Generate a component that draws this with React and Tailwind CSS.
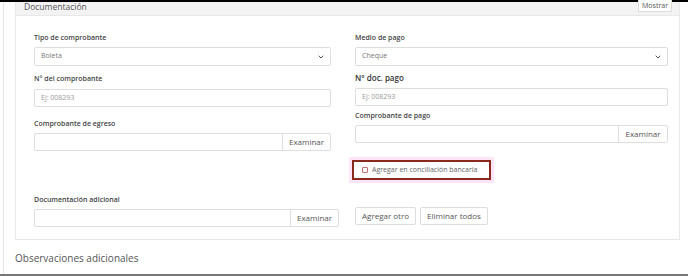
import React from 'react';

const font = "font-['Open_Sans',_'Noto_Sans',_sans-serif]";

function Label({ children, big }) {
  return (
    <div className={big ? "h-[10px] text-[8px] leading-[10px] font-semibold text-[#333]" : "h-[10px] text-[7px] leading-[10px] font-semibold text-[#444]"}>
      {children}
    </div>
  );
}

function Select({ value }) {
  return (
    <div className="h-[19px] border border-[#dedede] rounded-[2px] flex items-center justify-between pl-[6px] pr-[6px] text-[7px] text-[#777]">
      <span>{value}</span>
      <svg width="6" height="4" viewBox="0 0 6 4" fill="none">
        <path d="M1 1l2 2 2-2" stroke="#555" strokeWidth="1" strokeLinecap="round" />
      </svg>
    </div>
  );
}

function TextInput({ placeholder }) {
  return (
    <div className="h-[18px] border border-[#dedede] rounded-[2px] flex items-center pl-[6px] text-[7px] text-[#9a9a9a]">
      {placeholder}
    </div>
  );
}

function FileInput({ btnW = 'w-[48px]' }) {
  return (
    <div className="h-[18px] border border-[#dedede] rounded-[2px] flex">
      <div className="flex-1" />
      <div className={`${btnW} border-l border-[#dedede] flex items-center justify-center text-[8px] text-[#555]`}>
        Examinar
      </div>
    </div>
  );
}

export default function App() {
  return (
    <div className={`w-[688px] h-[276px] bg-white flex flex-col overflow-hidden ${font}`}>
      <div className="h-[2px] bg-black shrink-0" />
      <div className="flex-1 ml-[3px] border-l border-[#e6e6e6] pl-[11px] pr-[8px] flex flex-col">
        {/* Documentación card */}
        <div className="w-[665px] h-[238px] border border-[#e8e8e8] border-t-0 flex flex-col">
          <div className="h-[14px] bg-[#f3f3f3] border-b border-[#e8e8e8] flex justify-between pl-[8px] pr-[7px]">
            <span className="text-[8.5px] leading-[9px] text-[#555]">Documentación</span>
            <div className="-mt-[2px] h-[12px] px-[3px] bg-white border border-[#dcdcdc] border-t-0 text-[7px] leading-[11px] text-[#555]">
              Mostrar
            </div>
          </div>
          <div className="flex pl-[18px] pt-[17px]">
            {/* left column */}
            <div className="w-[305px] flex flex-col">
              <div className="w-[297px]">
                <Label>Tipo de comprobante</Label>
                <div className="mt-[4px]"><Select value="Boleta" /></div>
                <div className="mt-[8px]"><Label>N° del comprobante</Label></div>
                <div className="mt-[5px]"><TextInput placeholder="Ej: 008293" /></div>
                <div className="mt-[12px]"><Label>Comprobante de egreso</Label></div>
                <div className="mt-[4px]"><FileInput /></div>
              </div>
              <div className="mt-[44px]"><Label>Documentación adicional</Label></div>
              <div className="mt-[4px]"><FileInput /></div>
            </div>
            {/* right column */}
            <div className="w-[313px] ml-[16px] flex flex-col">
              <Label>Medio de pago</Label>
              <div className="mt-[4px]"><Select value="Cheque" /></div>
              <div className="mt-[7px]"><Label big>N° doc. pago</Label></div>
              <div className="mt-[5px]"><TextInput placeholder="Ej: 008293" /></div>
              <div className="mt-[5px]"><Label>Comprobante de pago</Label></div>
              <div className="mt-[4px]"><FileInput btnW="w-[49px]" /></div>
              <div className="mt-[17px] -ml-[3px] w-[139px] h-[20px] border-2 border-[#8a2a1f] shadow-[0_0_0_3px_#fde4f6] flex items-center pl-[8px] gap-[4px]">
                <div className="w-[6px] h-[6px] border border-[#c07070] rounded-[1px]" />
                <span className="text-[7px] text-[#666]">Agregar en conciliación bancaria</span>
              </div>
              <div className="mt-[27px] flex gap-[4px]">
                <div className="h-[18px] px-[6px] border border-[#dedede] rounded-[2px] flex items-center text-[8px] text-[#555]">Agregar otro</div>
                <div className="h-[18px] px-[6px] border border-[#dedede] rounded-[2px] flex items-center text-[8px] text-[#555]">Eliminar todos</div>
              </div>
            </div>
          </div>
        </div>
        <div className="mt-[11px] text-[10px] leading-[14px] text-[#555]">Observaciones adicionales</div>
      </div>
      <div className="h-[2px] bg-[#777] shrink-0" />
    </div>
  );
}
